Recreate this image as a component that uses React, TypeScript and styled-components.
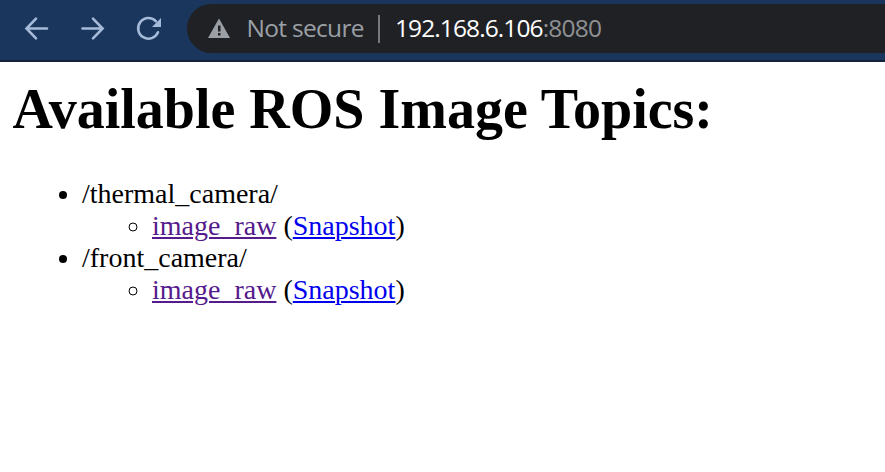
import React from "react";
import styled, { createGlobalStyle } from "styled-components";

const GlobalStyle = createGlobalStyle`
  body { margin: 0; background: #fff; overflow: hidden; }
`;

const Toolbar = styled.header`
  box-sizing: border-box;
  display: flex;
  align-items: flex-start;
  height: 62px;
  background: #1a365d;
  border-bottom: 2px solid #14233b;
`;

const NavButtons = styled.nav`
  display: flex;
  flex: none;
  width: 187px;
`;

const AddressBar = styled.div`
  box-sizing: border-box;
  display: flex;
  align-items: center;
  flex: 1;
  height: 49px;
  margin-top: 4px;
  padding-left: 20px;
  border-radius: 25px 0 0 25px;
  background: #202124;
  font: 24.5px/30px "Open Sans", sans-serif;
  white-space: nowrap;
`;

const WarningIcon = styled.svg`
  flex: none;
  margin-bottom: 1px;
`;

const AddressText = styled.span<{ $color: string; $spacing: number }>`
  margin-top: -2px;
  color: ${(p) => p.$color};
  letter-spacing: ${(p) => p.$spacing}px;
`;

const SecurityLabel = styled(AddressText)`
  width: 118px;
  margin-left: 15.5px;
`;

const Divider = styled.span`
  width: 2px;
  height: 28px;
  margin: 0 15.5px 0 13px;
  background: #75787c;
`;

const Page = styled.main`
  padding: 0 13px;
  font: 28px/32px "Liberation Serif", serif;
  color: #000;
`;

const Title = styled.h1`
  margin: 0 0 0 -0.6px;
  padding-top: 15px;
  font-size: 56px;
  line-height: 64px;
  white-space: nowrap;
`;

const List = styled.ul`
  margin: 37px 0 0;
  padding-left: 69px;
`;

const SubList = styled.ul`
  margin: 0;
  padding-left: 70px;
  list-style-type: circle;
`;

const Link = styled.a<{ $visited?: boolean }>`
  color: ${(p) => (p.$visited ? "#551a8b" : "#0000ee")};
  text-decoration: underline 2px;
  text-underline-offset: 2px;
`;

const topics = ["/thermal_camera/", "/front_camera/"];

export default function App() {
  return (
    <>
      <GlobalStyle />
      <Toolbar>
        <NavButtons>
          <svg width="187" height="58" fill="none" stroke="#a6bad9" strokeWidth="2.6" strokeLinecap="round">
            <path d="M47 28.5H27M36 18.7L26.5 28.5L36 38.3" />
            <path d="M82.5 28.5H102M93 18.7L102.6 28.5L93 38.3" />
            <path d="M156 21.3A10.3 10.3 0 1 0 158 32.3" />
            <path d="M161 18V27H152Z" fill="#a6bad9" stroke="none" />
          </svg>
        </NavButtons>
        <AddressBar>
          <WarningIcon width="24" height="22" viewBox="0 0 24 22">
            <path d="M1 21L12 1.5L23 21Z" fill="#9aa0a6" />
            <path d="M11 8.5h2.5v6H11zM11 16h2.5v2.5H11z" fill="#202124" />
          </WarningIcon>
          <SecurityLabel $color="#9aa0a6" $spacing={-0.7}>Not secure</SecurityLabel>
          <Divider />
          <AddressText $color="#ffffff" $spacing={-0.9}>192.168.6.106</AddressText>
          <AddressText $color="#8f9194" $spacing={-0.8}>:8080</AddressText>
        </AddressBar>
      </Toolbar>
      <Page>
        <Title>Available ROS Image Topics:</Title>
        <List>
          {topics.map((topic) => (
            <li key={topic}>
              {topic}
              <SubList>
                <li>
                  <Link $visited>image_raw</Link> (<Link>Snapshot</Link>)
                </li>
              </SubList>
            </li>
          ))}
        </List>
      </Page>
    </>
  );
}
